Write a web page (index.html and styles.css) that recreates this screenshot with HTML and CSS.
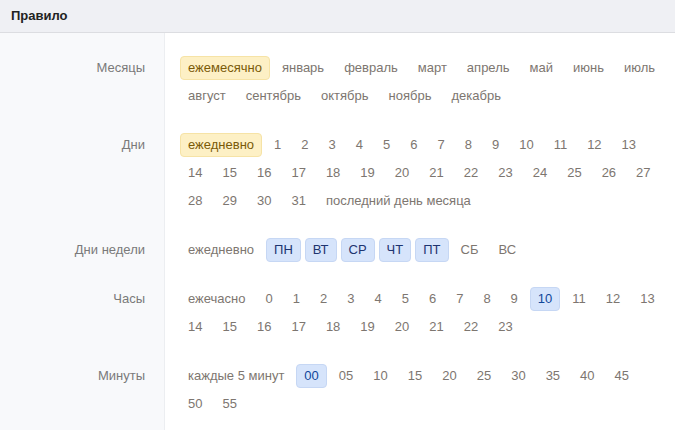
FILE: index.html
```html
<!DOCTYPE html>
<html lang="ru">
<head>
<meta charset="utf-8">
<title>Правило</title>
<link rel="stylesheet" href="styles.css">
</head>
<body>
<div class="panel">
  <div class="header">Правило</div>
  <div class="form">
    <div class="row first">
      <div class="label">Месяцы</div>
      <div class="options">
        <span class="opt yellow">ежемесячно</span>
        <span class="opt">январь</span>
        <span class="opt">февраль</span>
        <span class="opt">март</span>
        <span class="opt">апрель</span>
        <span class="opt">май</span>
        <span class="opt">июнь</span>
        <span class="opt">июль</span>
        <span class="opt">август</span>
        <span class="opt">сентябрь</span>
        <span class="opt">октябрь</span>
        <span class="opt">ноябрь</span>
        <span class="opt">декабрь</span>
      </div>
    </div>
    <div class="row">
      <div class="label">Дни</div>
      <div class="options">
        <span class="opt yellow">ежедневно</span>
        <span class="opt">1</span><span class="opt">2</span><span class="opt">3</span><span class="opt">4</span><span class="opt">5</span><span class="opt">6</span><span class="opt">7</span><span class="opt">8</span><span class="opt">9</span><span class="opt">10</span><span class="opt">11</span><span class="opt">12</span><span class="opt">13</span>
        <span class="opt">14</span><span class="opt">15</span><span class="opt">16</span><span class="opt">17</span><span class="opt">18</span><span class="opt">19</span><span class="opt">20</span><span class="opt">21</span><span class="opt">22</span><span class="opt">23</span><span class="opt">24</span><span class="opt">25</span><span class="opt">26</span><span class="opt">27</span>
        <span class="opt">28</span><span class="opt">29</span><span class="opt">30</span><span class="opt">31</span>
        <span class="opt">последний день месяца</span>
      </div>
    </div>
    <div class="row">
      <div class="label">Дни недели</div>
      <div class="options">
        <span class="opt">ежедневно</span>
        <span class="opt blue">ПН</span>
        <span class="opt blue">ВТ</span>
        <span class="opt blue">СР</span>
        <span class="opt blue">ЧТ</span>
        <span class="opt blue">ПТ</span>
        <span class="opt">СБ</span>
        <span class="opt">ВС</span>
      </div>
    </div>
    <div class="row">
      <div class="label">Часы</div>
      <div class="options">
        <span class="opt">ежечасно</span>
        <span class="opt">0</span><span class="opt">1</span><span class="opt">2</span><span class="opt">3</span><span class="opt">4</span><span class="opt">5</span><span class="opt">6</span><span class="opt">7</span><span class="opt">8</span><span class="opt">9</span><span class="opt blue sel">10</span><span class="opt">11</span><span class="opt">12</span><span class="opt">13</span>
        <span class="opt">14</span><span class="opt">15</span><span class="opt">16</span><span class="opt">17</span><span class="opt">18</span><span class="opt">19</span><span class="opt">20</span><span class="opt">21</span><span class="opt">22</span><span class="opt">23</span>
      </div>
    </div>
    <div class="row">
      <div class="label">Минуты</div>
      <div class="options">
        <span class="opt">каждые 5 минут</span>
        <span class="opt blue sel">00</span><span class="opt">05</span><span class="opt">10</span><span class="opt">15</span><span class="opt">20</span><span class="opt">25</span><span class="opt">30</span><span class="opt">35</span><span class="opt">40</span><span class="opt">45</span>
        <span class="opt">50</span><span class="opt">55</span>
      </div>
    </div>
  </div>
</div>
</body>
</html>
```
FILE: styles.css
```css
html, body {
  margin: 0;
  padding: 0;
  height: 100%;
}
body {
  font-family: "Liberation Sans", Arial, sans-serif;
  font-size: 13px;
  color: #777;
  background: #fff;
}
.panel {
  min-height: 100%;
  display: flex;
  flex-direction: column;
}
.header {
  height: 32px;
  line-height: 32px;
  padding: 0 11px;
  background: #eff0f4;
  border-bottom: 1px solid #dcdde1;
  font-weight: bold;
  color: #222;
}
.form {
  flex: 1;
  padding-top: 11px;
  background: linear-gradient(to right, #f8f9fb 0, #f8f9fb 164px, #eceef1 164px, #eceef1 165px, #fff 165px);
}
.row {
  display: flex;
  padding: 12px 0 13px;
}
.label {
  width: 145px;
  flex: none;
  text-align: right;
  line-height: 24px;
  color: #7a7a7a;
}
.options {
  flex: 1;
  margin-left: 35px;
  margin-right: 8px;
  display: flex;
  flex-wrap: wrap;
  gap: 4px 4px;
}
.opt {
  display: block;
  height: 24px;
  line-height: 22px;
  box-sizing: border-box;
  padding: 0 7px;
  border: 1px solid transparent;
  border-radius: 4px;
  color: #7d7670;
  white-space: nowrap;
}
.opt.yellow {
  background: #fdf0c5;
  border-color: #f6e3a6;
  color: #7a5a08;
}
.opt.blue {
  background: #d6e4fb;
  border-color: #c6d7f4;
  color: #1e3470;
}
.opt.sel {
  color: #11479a;
}
```
